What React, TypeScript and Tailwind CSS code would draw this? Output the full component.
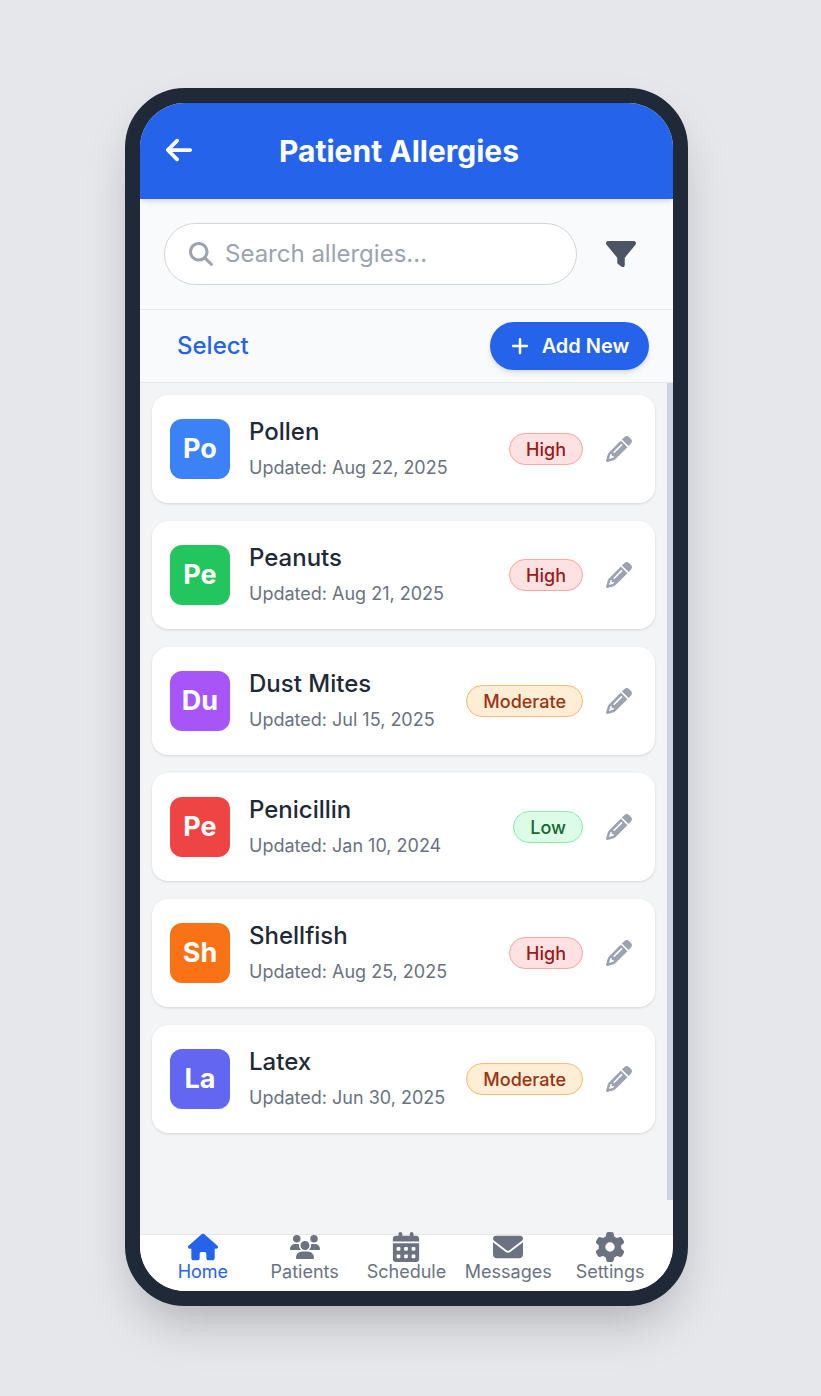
import { FaArrowLeft, FaCalendarDays, FaEnvelope, FaFilter, FaGear, FaHouse, FaMagnifyingGlass, FaPencil, FaPlus, FaUsers } from "react-icons/fa6";

const severity = {
  High: "bg-[#fee2e2] border-[#fca5a5] text-[#991b1b]",
  Moderate: "bg-[#ffedd5] border-[#fdba74] text-[#9a3412]",
  Low: "bg-[#dcfce7] border-[#86efac] text-[#166534]",
};

const items: { a: string; color: string; name: string; date: string; level: keyof typeof severity }[] = [
  { a: "Po", color: "bg-[#3b82f6]", name: "Pollen", date: "Updated: Aug 22, 2025", level: "High" },
  { a: "Pe", color: "bg-[#22c55e]", name: "Peanuts", date: "Updated: Aug 21, 2025", level: "High" },
  { a: "Du", color: "bg-[#a855f7]", name: "Dust Mites", date: "Updated: Jul 15, 2025", level: "Moderate" },
  { a: "Pe", color: "bg-[#ef4444]", name: "Penicillin", date: "Updated: Jan 10, 2024", level: "Low" },
  { a: "Sh", color: "bg-[#f97316]", name: "Shellfish", date: "Updated: Aug 25, 2025", level: "High" },
  { a: "La", color: "bg-[#6366f1]", name: "Latex", date: "Updated: Jun 30, 2025", level: "Moderate" },
];

const nav = [
  { label: "Home", Icon: FaHouse, active: true },
  { label: "Patients", Icon: FaUsers },
  { label: "Schedule", Icon: FaCalendarDays },
  { label: "Messages", Icon: FaEnvelope },
  { label: "Settings", Icon: FaGear },
];

export default function App() {
  return (
    <div className="min-h-[1396px] bg-[#e5e7eb] pt-[88px] pr-2 font-['Inter',sans-serif]">
      <div className="mx-auto h-[1218px] w-[563px] rounded-[60px] border-[15px] border-[#1f2937] bg-[#1f2937] shadow-2xl">
        <div className="flex h-full flex-col overflow-hidden rounded-[45px] bg-[#f3f4f6]">
          <header className="relative z-10 flex h-[96px] shrink-0 items-center bg-[#2563eb] px-6 shadow-md">
            <FaArrowLeft className="mb-[3px] h-[30px] w-auto text-white" />
            <h1 className="ml-[85px] text-[30px] leading-9 font-bold text-white">Patient Allergies</h1>
          </header>

          <div className="flex h-[111px] shrink-0 items-center gap-[29px] border-b border-[#e5e7eb] bg-[#f9fafb] px-6">
            <div className="flex h-[62px] w-[413px] items-center rounded-full border border-[#d1d5db] bg-white pl-6">
              <FaMagnifyingGlass className="h-6 w-6 text-[#9ca3af]" />
              <span className="ml-3 text-[24px] leading-8 text-[#9ca3af]">Search allergies...</span>
            </div>
            <FaFilter className="h-[30px] w-auto text-[#4b5563]" />
          </div>

          <div className="flex h-[73px] shrink-0 items-center justify-between border-b border-[#e5e7eb] bg-[#f9fafb] pr-6 pl-[37px]">
            <span className="text-[24px] leading-8 font-medium text-[#2563eb]">Select</span>
            <div className="flex h-12 w-[159px] items-center justify-center gap-3 rounded-full bg-[#2563eb] text-white shadow-md">
              <FaPlus className="h-5 w-auto" />
              <span className="text-[20px] leading-7 font-semibold">Add New</span>
            </div>
          </div>

          <div className="relative flex-1 overflow-hidden">
            <div className="flex flex-col gap-[18px] pt-3 pr-[18px] pl-3">
              {items.map((it) => (
                <div key={it.name} className="flex h-[108px] items-center rounded-2xl bg-white pr-[23px] pl-[18px] shadow-sm">
                  <div className={`flex h-[60px] w-[60px] shrink-0 items-center justify-center rounded-xl text-[27px] font-bold text-white ${it.color}`}>{it.a}</div>
                  <div className="ml-[19px] flex-1">
                    <div className="text-[24px] leading-8 font-medium text-[#1f2937]">{it.name}</div>
                    <div className="mt-[6px] text-[18px] leading-7 text-[#6b7280]">{it.date}</div>
                  </div>
                  <span className={`flex h-8 items-center rounded-full border px-4 text-[18px] font-medium ${severity[it.level]}`}>{it.level}</span>
                  <FaPencil className="ml-[23px] h-[26px] w-[26px] text-[#9ca3af]" />
                </div>
              ))}
            </div>
            <div className="absolute top-0 right-0 h-[817px] w-[6px] bg-[#cbd5e1]" />
          </div>

          <nav className="grid h-[57px] shrink-0 grid-cols-5 border-t border-[#e5e7eb] bg-white px-3">
            {nav.map(({ label, Icon, active }) => (
              <div key={label} className={`flex h-[57px] flex-col items-center ${active ? "text-[#2563eb]" : "text-[#6b7280]"}`}>
                <Icon className="-mt-[3px] h-[30px] w-auto shrink-0" />
                <span className="-mt-[4px] text-[18px] leading-7 whitespace-nowrap">{label}</span>
              </div>
            ))}
          </nav>
        </div>
      </div>
    </div>
  );
}
